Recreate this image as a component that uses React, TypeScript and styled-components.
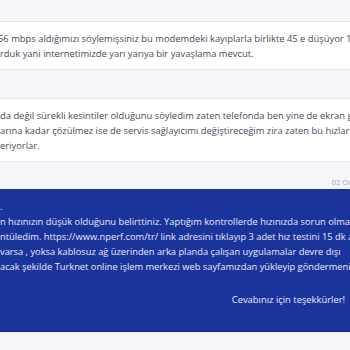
import React from 'react'
import styled, { createGlobalStyle } from 'styled-components'

const GlobalStyle = createGlobalStyle`
  html, body {
    margin: 0;
    padding: 0;
  }
  body {
    background: #f4f6fa;
    font-family: 'Open Sans', 'Noto Sans', sans-serif;
    overflow: hidden;
  }
`

const Thread = styled.div`
  width: 350px;
  height: 350px;
  overflow: hidden;
  display: flex;
  flex-direction: column;
  background: #f4f6fa;
`

const Footer = styled.div<{ $h?: number }>`
  height: ${({ $h }) => $h ?? 28}px;
  flex-shrink: 0;
  display: flex;
  justify-content: flex-end;
  align-items: flex-end;
  padding-bottom: 2px;
  box-sizing: border-box;
`

const DateStamp = styled.span`
  font-size: 7.5px;
  line-height: 10px;
  color: #a5abb7;
  white-space: nowrap;
  margin-right: -29px;
`

const Message = styled.div`
  flex-shrink: 0;
  background: #fff;
  border-top: 1px solid #e2e6ee;
  border-bottom: 1px solid #e2e6ee;
  padding: 9px 0 8px;
  color: #474c57;
  font-size: 9.4px;
  line-height: 15px;
`

const Reply = styled.div`
  flex-shrink: 0;
  background: #1b349c;
  border-bottom: 1px solid #162c88;
  padding: 10px 5px 24px 0;
  color: #e8ebf7;
  font-size: 9.3px;
  line-height: 15px;
`

const Line = styled.div<{ $lead?: number }>`
  white-space: nowrap;
  margin-left: ${({ $lead }) => $lead ?? 0}px;
`

const SignOff = styled.div`
  margin-top: 18px;
  font-size: 9.4px;
  text-align: right;
  white-space: nowrap;
`

export default function App() {
  return (
    <>
      <GlobalStyle />
      <Thread>
        <Footer $h={21} />
        <Message>
          <Line $lead={-2}>56 mbps aldığımızı söylemişsiniz bu modemdeki kayıplarla birlikte 45 e düşüyor 10 mbps</Line>
          <Line>rduk yani internetimizde yarı yarıya bir yavaşlama mevcut.</Line>
        </Message>
        <Footer />
        <Message>
          <Line>da değil sürekli kesintiler olduğunu söyledim zaten telefonda ben yine de ekran görüntüsü</Line>
          <Line>arına kadar çözülmez ise de servis sağlayıcımı değiştireceğim zira zaten bu hızlar için</Line>
          <Line>eriyorlar.</Line>
        </Message>
        <Footer $h={27}>
          <DateStamp>02 Ocak 2024</DateStamp>
        </Footer>
        <Reply>
          <Line>.</Line>
          <Line>n hızınızın düşük olduğunu belirttiniz. Yaptığım kontrollerde hızınızda sorun olmadığını</Line>
          <Line>ntüledim. https://www.nperf.com/tr/ link adresini tıklayıp 3 adet hız testini 15 dk arayla</Line>
          <Line>varsa , yoksa kablosuz ağ üzerinden arka planda çalışan uygulamalar devre dışı</Line>
          <Line>acak şekilde Turknet online işlem merkezi web sayfamızdan yükleyip göndermenizi</Line>
          <SignOff>Cevabınız için teşekkürler!</SignOff>
        </Reply>
      </Thread>
    </>
  )
}
